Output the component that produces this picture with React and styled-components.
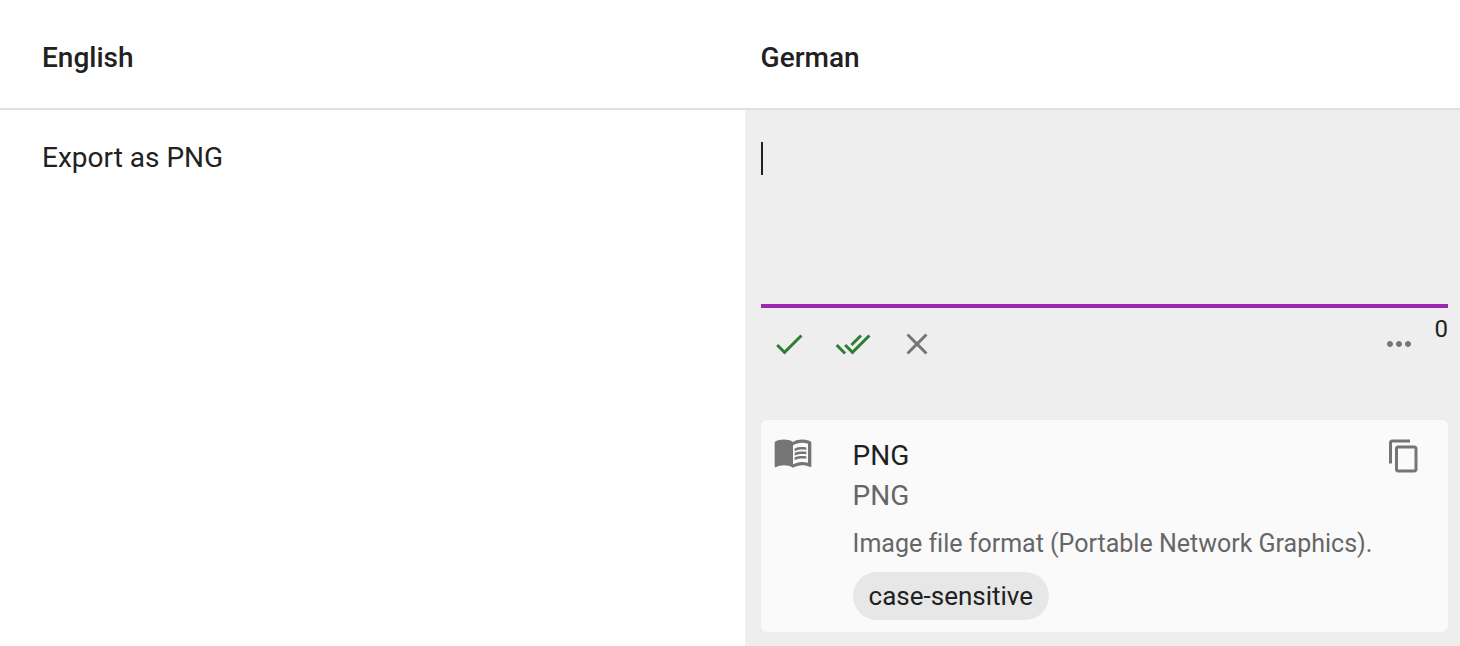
import {
  MdCheck,
  MdClose,
  MdContentCopy,
  MdDoneAll,
  MdMenuBook,
  MdMoreHoriz,
} from "react-icons/md";
import React, { useState } from "react";
import styled, { createGlobalStyle } from "styled-components";

const GlobalStyle = createGlobalStyle`
  * {
    box-sizing: border-box;
  }

  body {
    margin: 0;
    background-color: #fff;
    color: #212121;
    font-family: Roboto, "Liberation Sans", sans-serif;
    font-size: 28px;
    font-variant-ligatures: none;
  }
`;

const Table = styled.table`
  width: 100%;
  min-height: 100vh;
  table-layout: fixed;
  border-collapse: separate;
  border-spacing: 0;
`;

const HeaderCell = styled.th`
  width: ${(props) => props.$width};
  padding: 38px 16px 30px ${(props) => (props.$first ? "42px" : "16px")};
  border-bottom: 2px solid #e0e0e0;
  font-weight: 500;
  line-height: 40px;
  text-align: left;
`;

const SourceCell = styled.td`
  padding: 28px 16px 16px 42px;
  line-height: 40px;
  vertical-align: top;
`;

const TranslationCell = styled.td`
  padding: 32px 12px 14px 16px;
  background-color: #eee;
  vertical-align: top;
`;

const Editor = styled.div`
  position: relative;
`;

const TranslationInput = styled.textarea`
  display: block;
  width: 100%;
  height: 166px;
  padding: 0;
  border: none;
  border-bottom: 4px solid #9c27b0;
  border-radius: 0;
  outline: none;
  background: transparent;
  color: inherit;
  font: inherit;
  line-height: 33px;
  resize: none;
`;

const Caret = styled.span`
  position: absolute;
  top: 0;
  left: 0;
  width: 2px;
  height: 33px;
  background-color: #212121;
  pointer-events: none;
`;

const Toolbar = styled.div`
  display: flex;
  gap: 8px;
  margin-top: 8px;
`;

const IconButton = styled.button`
  display: flex;
  flex: none;
  align-items: center;
  justify-content: center;
  width: 56px;
  height: 56px;
  padding: 0;
  border: none;
  border-radius: 50%;
  background: transparent;
  color: ${(props) => props.$color || "#757575"};
  font-size: 36px;
  cursor: pointer;
`;

const ToolbarSpacer = styled.div`
  flex: 1;
`;

const Counter = styled.span`
  font-size: 24px;
  line-height: 26px;
`;

const GlossaryCard = styled.div`
  display: flex;
  align-items: flex-start;
  margin-top: 48px;
  padding: 8px 16px 12px 12px;
  border-radius: 6px;
  background-color: #fafafa;
`;

const GlossaryIcon = styled.div`
  display: flex;
  flex: none;
  width: 80px;
  padding-top: 4px;
  color: #757575;
  font-size: 40px;
`;

const GlossaryContent = styled.div`
  flex: 1;
  min-width: 0;
  padding-top: 8px;
`;

const Term = styled.div`
  line-height: 40px;
`;

const TermTranslation = styled.div`
  color: #666;
  line-height: 40px;
`;

const TermNote = styled.div`
  margin: 8px 0;
  color: #666;
  font-size: 25px;
  line-height: 40px;
`;

const Chip = styled.span`
  display: inline-flex;
  align-items: center;
  height: 48px;
  padding: 0 16px;
  border-radius: 24px;
  background-color: #e7e7e7;
  font-size: 26px;
  vertical-align: top;
`;

export default function App() {
  const [text, setText] = useState("");

  return (
    <>
      <GlobalStyle />
      <Table>
        <thead>
          <tr>
            <HeaderCell scope="col" $width="51%" $first>
              English
            </HeaderCell>
            <HeaderCell scope="col" $width="49%">
              German
            </HeaderCell>
          </tr>
        </thead>
        <tbody>
          <tr>
            <SourceCell>Export as PNG</SourceCell>
            <TranslationCell>
              <Editor>
                <TranslationInput
                  aria-label="German translation"
                  value={text}
                  onChange={(e) => setText(e.target.value)}
                />
                {!text && <Caret />}
              </Editor>
              <Toolbar>
                <IconButton type="button" aria-label="Save" $color="#2e7d32">
                  <MdCheck />
                </IconButton>
                <IconButton
                  type="button"
                  aria-label="Save and review"
                  $color="#2e7d32"
                >
                  <MdDoneAll />
                </IconButton>
                <IconButton type="button" aria-label="Cancel">
                  <MdClose />
                </IconButton>
                <ToolbarSpacer />
                <IconButton type="button" aria-label="More">
                  <MdMoreHoriz />
                </IconButton>
                <Counter>{text.length}</Counter>
              </Toolbar>
              <GlossaryCard>
                <GlossaryIcon>
                  <MdMenuBook />
                </GlossaryIcon>
                <GlossaryContent>
                  <Term>PNG</Term>
                  <TermTranslation>PNG</TermTranslation>
                  <TermNote>
                    Image file format (Portable Network Graphics).
                  </TermNote>
                  <Chip>case-sensitive</Chip>
                </GlossaryContent>
                <IconButton type="button" aria-label="Copy">
                  <MdContentCopy />
                </IconButton>
              </GlossaryCard>
            </TranslationCell>
          </tr>
        </tbody>
      </Table>
    </>
  );
}
